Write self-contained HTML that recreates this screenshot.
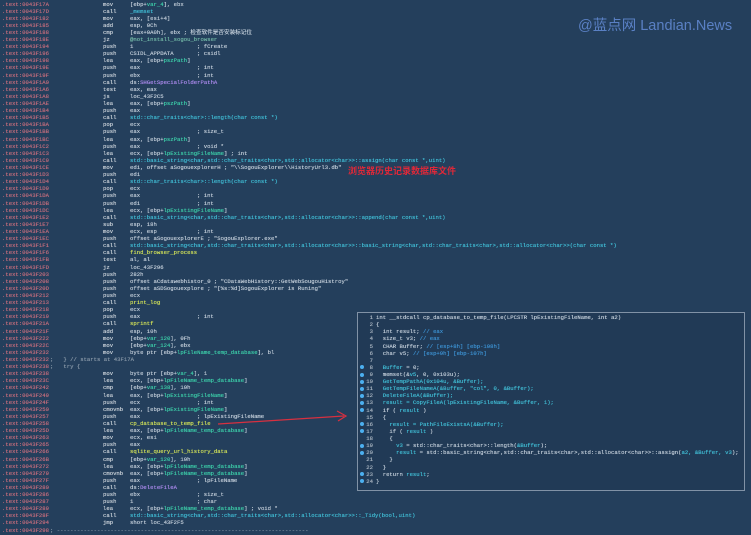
<!DOCTYPE html>
<html><head><meta charset="utf-8"><style>
*{margin:0;padding:0}
body{width:751px;height:535px;background:#243f5c;overflow:hidden;position:relative;font-family:"Liberation Mono","Noto Sans CJK SC",monospace;font-size:5.6px;color:#c0ccd8;text-shadow:0 0 0.4px currentColor}
#c{position:absolute;left:0;top:0.5px;width:751px}
#c div{position:relative;height:7.12px;line-height:7.12px;white-space:pre}
b,i,u,s{font-weight:normal;font-style:normal;text-decoration:none;position:absolute}
b{left:2px;color:#c06c7c}
i{left:103px;color:#c8d0d8}
u{left:130px}
s{left:197px}
.f{color:#40bcd4}.y{color:#d0e058}.g{color:#3ccca8}.p{color:#a888ea}.t{color:#70b4a4}
#pop{position:absolute;left:357px;top:312px;width:386px;height:177px;border:1px solid #8192a6;background:#213a56}
#pop div{position:absolute;left:0;height:7.12px;line-height:7.12px;white-space:pre;width:386px}
#pop em{font-style:normal;position:absolute;left:0;width:15px;text-align:right;color:#a8b4c0}
#pop span.c{position:absolute;left:18px}
.dot{position:absolute;left:2px;top:1.5px;width:4px;height:4px;border-radius:50%;background:#4cb0f0}
.cm{color:#3c90d0}
#wm{position:absolute;left:578px;top:14px;font-family:"Liberation Sans","Noto Sans CJK SC",sans-serif;font-size:14.5px;color:#5a80c4;text-shadow:none}
#red{position:absolute;left:348px;top:164px;font-family:"Liberation Sans","Noto Sans CJK SC",sans-serif;font-size:9px;font-weight:bold;color:#e02838;text-shadow:none}
</style></head><body>
<div id="c">
<div><b>.text:0043F17A</b><i>mov</i><u>[ebp+<span class="g">var_4</span>], ebx</u></div>
<div><b>.text:0043F17D</b><i>call</i><u class="f">_memset</u></div>
<div><b>.text:0043F182</b><i>mov</i><u>eax, [esi+4]</u></div>
<div><b>.text:0043F185</b><i>add</i><u>esp, 0Ch</u></div>
<div><b>.text:0043F188</b><i>cmp</i><u>[eax+0A0h], ebx ; 检查软件是否安装标记位</u></div>
<div><b>.text:0043F18E</b><i>jz</i><u class="t">@not_install_sogou_browser</u></div>
<div><b>.text:0043F194</b><i>push</i><u>1</u><s>; fCreate</s></div>
<div><b>.text:0043F196</b><i>push</i><u>CSIDL_APPDATA</u><s>; csidl</s></div>
<div><b>.text:0043F198</b><i>lea</i><u>eax, [ebp+<span class="g">pszPath</span>]</u></div>
<div><b>.text:0043F19E</b><i>push</i><u>eax</u><s>; int</s></div>
<div><b>.text:0043F19F</b><i>push</i><u>ebx</u><s>; int</s></div>
<div><b>.text:0043F1A0</b><i>call</i><u>ds:<span class="p">SHGetSpecialFolderPathA</span></u></div>
<div><b>.text:0043F1A6</b><i>test</i><u>eax, eax</u></div>
<div><b>.text:0043F1A8</b><i>js</i><u>loc_43F2C5</u></div>
<div><b>.text:0043F1AE</b><i>lea</i><u>eax, [ebp+<span class="g">pszPath</span>]</u></div>
<div><b>.text:0043F1B4</b><i>push</i><u>eax</u></div>
<div><b>.text:0043F1B5</b><i>call</i><u class="f">std::char_traits&lt;char&gt;::length(char const *)</u></div>
<div><b>.text:0043F1BA</b><i>pop</i><u>ecx</u></div>
<div><b>.text:0043F1BB</b><i>push</i><u>eax</u><s>; size_t</s></div>
<div><b>.text:0043F1BC</b><i>lea</i><u>eax, [ebp+<span class="g">pszPath</span>]</u></div>
<div><b>.text:0043F1C2</b><i>push</i><u>eax</u><s>; void *</s></div>
<div><b>.text:0043F1C3</b><i>lea</i><u>ecx, [ebp+<span class="g">lpExistingFileName</span>] ; int</u></div>
<div><b>.text:0043F1C9</b><i>call</i><u class="f">std::basic_string&lt;char,std::char_traits&lt;char&gt;,std::allocator&lt;char&gt;&gt;::assign(char const *,uint)</u></div>
<div><b>.text:0043F1CE</b><i>mov</i><u>edi, offset aSogouexplorerH ; "\\SogouExplorer\\HistoryUrl3.db"</u></div>
<div><b>.text:0043F1D3</b><i>push</i><u>edi</u></div>
<div><b>.text:0043F1D4</b><i>call</i><u class="f">std::char_traits&lt;char&gt;::length(char const *)</u></div>
<div><b>.text:0043F1D9</b><i>pop</i><u>ecx</u></div>
<div><b>.text:0043F1DA</b><i>push</i><u>eax</u><s>; int</s></div>
<div><b>.text:0043F1DB</b><i>push</i><u>edi</u><s>; int</s></div>
<div><b>.text:0043F1DC</b><i>lea</i><u>ecx, [ebp+<span class="g">lpExistingFileName</span>]</u></div>
<div><b>.text:0043F1E2</b><i>call</i><u class="f">std::basic_string&lt;char,std::char_traits&lt;char&gt;,std::allocator&lt;char&gt;&gt;::append(char const *,uint)</u></div>
<div><b>.text:0043F1E7</b><i>sub</i><u>esp, 18h</u></div>
<div><b>.text:0043F1EA</b><i>mov</i><u>ecx, esp</u><s>; int</s></div>
<div><b>.text:0043F1EC</b><i>push</i><u>offset aSogouexplorerE ; "SogouExplorer.exe"</u></div>
<div><b>.text:0043F1F1</b><i>call</i><u class="f">std::basic_string&lt;char,std::char_traits&lt;char&gt;,std::allocator&lt;char&gt;&gt;::basic_string&lt;char,std::char_traits&lt;char&gt;,std::allocator&lt;char&gt;&gt;(char const *)</u></div>
<div><b>.text:0043F1F6</b><i>call</i><u class="y">find_browser_process</u></div>
<div><b>.text:0043F1FB</b><i>test</i><u>al, al</u></div>
<div><b>.text:0043F1FD</b><i>jz</i><u>loc_43F296</u></div>
<div><b>.text:0043F203</b><i>push</i><u>282h</u></div>
<div><b>.text:0043F208</b><i>push</i><u>offset aCdatawebhistor_0 ; "CDataWebHistory::GetWebSougouHistroy"</u></div>
<div><b>.text:0043F20D</b><i>push</i><u>offset aSDSogouexplore ; "[%s:%d]SogouExplorer is Runing"</u></div>
<div><b>.text:0043F212</b><i>push</i><u>ecx</u></div>
<div><b>.text:0043F213</b><i>call</i><u class="y">print_log</u></div>
<div><b>.text:0043F218</b><i>pop</i><u>ecx</u></div>
<div><b>.text:0043F219</b><i>push</i><u>eax</u><s>; int</s></div>
<div><b>.text:0043F21A</b><i>call</i><u class="y">sprintf</u></div>
<div><b>.text:0043F21F</b><i>add</i><u>esp, 10h</u></div>
<div><b>.text:0043F222</b><i>mov</i><u>[ebp+<span class="g">var_120</span>], 0Fh</u></div>
<div><b>.text:0043F22C</b><i>mov</i><u>[ebp+<span class="g">var_124</span>], ebx</u></div>
<div><b>.text:0043F232</b><i>mov</i><u>byte ptr [ebp+<span class="g">lpFileName_temp_database</span>], bl</u></div>
<div><b>.text:0043F232</b><i style="left:50px;color:#8898a8">;   } // starts at 43F17A</i></div>
<div><b>.text:0043F238</b><i style="left:50px;color:#8898a8">;   try {</i></div>
<div><b>.text:0043F238</b><i>mov</i><u>byte ptr [ebp+<span class="g">var_4</span>], 1</u></div>
<div><b>.text:0043F23C</b><i>lea</i><u>ecx, [ebp+<span class="g">lpFileName_temp_database</span>]</u></div>
<div><b>.text:0043F242</b><i>cmp</i><u>[ebp+<span class="g">var_138</span>], 10h</u></div>
<div><b>.text:0043F249</b><i>lea</i><u>eax, [ebp+<span class="g">lpExistingFileName</span>]</u></div>
<div><b>.text:0043F24F</b><i>push</i><u>ecx</u><s>; int</s></div>
<div><b>.text:0043F250</b><i>cmovnb</i><u>eax, [ebp+<span class="g">lpExistingFileName</span>]</u></div>
<div><b>.text:0043F257</b><i>push</i><u>eax</u><s>; lpExistingFileName</s></div>
<div><b>.text:0043F258</b><i>call</i><u class="y">cp_database_to_temp_file</u></div>
<div><b>.text:0043F25D</b><i>lea</i><u>eax, [ebp+<span class="g">lpFileName_temp_database</span>]</u></div>
<div><b>.text:0043F263</b><i>mov</i><u>ecx, esi</u></div>
<div><b>.text:0043F265</b><i>push</i><u>eax</u></div>
<div><b>.text:0043F266</b><i>call</i><u class="y">sqlite_query_url_history_data</u></div>
<div><b>.text:0043F26B</b><i>cmp</i><u>[ebp+<span class="g">var_120</span>], 10h</u></div>
<div><b>.text:0043F272</b><i>lea</i><u>eax, [ebp+<span class="g">lpFileName_temp_database</span>]</u></div>
<div><b>.text:0043F279</b><i>cmovnb</i><u>eax, [ebp+<span class="g">lpFileName_temp_database</span>]</u></div>
<div><b>.text:0043F27F</b><i>push</i><u>eax</u><s>; lpFileName</s></div>
<div><b>.text:0043F280</b><i>call</i><u>ds:<span class="p">DeleteFileA</span></u></div>
<div><b>.text:0043F286</b><i>push</i><u>ebx</u><s>; size_t</s></div>
<div><b>.text:0043F287</b><i>push</i><u>1</u><s>; char</s></div>
<div><b>.text:0043F289</b><i>lea</i><u>ecx, [ebp+<span class="g">lpFileName_temp_database</span>] ; void *</u></div>
<div><b>.text:0043F28F</b><i>call</i><u class="f">std::basic_string&lt;char,std::char_traits&lt;char&gt;,std::allocator&lt;char&gt;&gt;::_Tidy(bool,uint)</u></div>
<div><b>.text:0043F294</b><i>jmp</i><u>short loc_43F2F5</u></div>
<div><b>.text:0043F298</b><i style="left:50px;color:#8898a8">; ---------------------------------------------------------------------------</i></div>
</div>

<div id="wm">@蓝点网 Landian.News</div>
<div id="red">浏览器历史记录数据库文件</div>

<svg style="position:absolute;left:0;top:0" width="751" height="535">
<line x1="218" y1="424" x2="344" y2="416" stroke="#d83040" stroke-width="1.2"/>
<polyline points="337,411 346,416 338,421" fill="none" stroke="#d83040" stroke-width="1.2"/>
</svg>

<div id="pop">
<div style="top:1px"><em>1</em><span class="c">int __stdcall cp_database_to_temp_file(LPCSTR lpExistingFileName, int a2)</span></div>
<div style="top:8.1px"><em>2</em><span class="c">{</span></div>
<div style="top:15.2px"><em>3</em><span class="c">  int result; <span class="cm">// eax</span></span></div>
<div style="top:22.4px"><em>4</em><span class="c">  size_t v3; <span class="cm">// eax</span></span></div>
<div style="top:29.5px"><em>5</em><span class="c">  CHAR Buffer; <span class="cm">// [esp+8h] [ebp-108h]</span></span></div>
<div style="top:36.6px"><em>6</em><span class="c">  char v5; <span class="cm">// [esp+9h] [ebp-107h]</span></span></div>
<div style="top:43.7px"><em>7</em></div>
<div style="top:50.8px"><i class="dot"></i><em>8</em><span class="c">  <span class="f">Buffer</span> = 0;</span></div>
<div style="top:58px"><i class="dot"></i><em>9</em><span class="c">  memset(&amp;<span class="f">v5</span>, 0, 0x103u);</span></div>
<div style="top:65.1px"><i class="dot"></i><em>10</em><span class="c">  <span class="f">GetTempPathA(0x104u, &amp;Buffer);</span></span></div>
<div style="top:72.2px"><i class="dot"></i><em>11</em><span class="c">  <span class="f">GetTempFileNameA(&amp;Buffer, "col", 0, &amp;Buffer);</span></span></div>
<div style="top:79.3px"><i class="dot"></i><em>12</em><span class="c">  <span class="f">DeleteFileA(&amp;Buffer);</span></span></div>
<div style="top:86.4px"><i class="dot"></i><em>13</em><span class="c">  <span class="f">result = CopyFileA(lpExistingFileName, &amp;Buffer, 1);</span></span></div>
<div style="top:93.6px"><i class="dot"></i><em>14</em><span class="c">  if ( <span class="f">result</span> )</span></div>
<div style="top:100.7px"><em>15</em><span class="c">  {</span></div>
<div style="top:107.8px"><i class="dot"></i><em>16</em><span class="c">    <span class="f">result = PathFileExistsA(&amp;Buffer);</span></span></div>
<div style="top:114.9px"><i class="dot"></i><em>17</em><span class="c">    if ( <span class="f">result</span> )</span></div>
<div style="top:122px"><em>18</em><span class="c">    {</span></div>
<div style="top:129.2px"><i class="dot"></i><em>19</em><span class="c">      <span class="f">v3</span> = std::char_traits&lt;char&gt;::length(<span class="f">&amp;Buffer</span>);</span></div>
<div style="top:136.3px"><i class="dot"></i><em>20</em><span class="c">      <span class="f">result</span> = std::basic_string&lt;char,std::char_traits&lt;char&gt;,std::allocator&lt;char&gt;&gt;::assign(<span class="f">a2, &amp;Buffer, v3</span>);</span></div>
<div style="top:143.4px"><em>21</em><span class="c">    }</span></div>
<div style="top:150.5px"><em>22</em><span class="c">  }</span></div>
<div style="top:157.6px"><i class="dot"></i><em>23</em><span class="c">  return <span class="f">result</span>;</span></div>
<div style="top:164.8px"><i class="dot"></i><em>24</em><span class="c">}</span></div>
</div>
</body></html>
